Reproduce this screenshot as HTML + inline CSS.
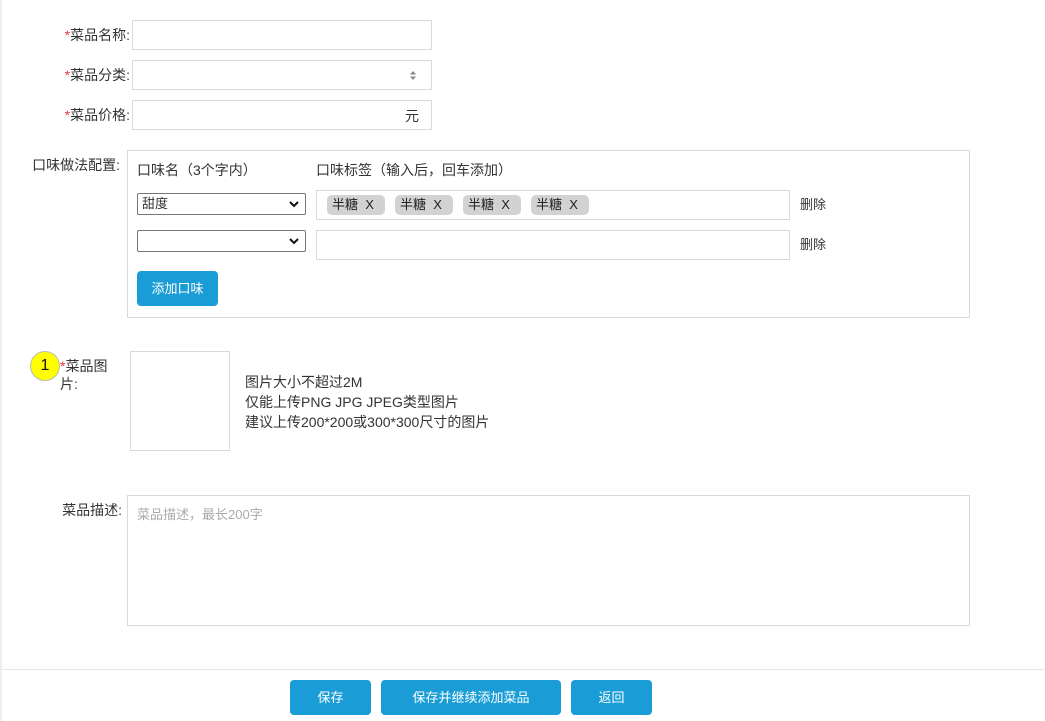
<!DOCTYPE html>
<html><head><meta charset="utf-8"><style>
*{box-sizing:border-box;margin:0;padding:0}
body{width:1045px;height:721px;background:#fff;position:relative;overflow:hidden;font-family:"Liberation Sans","Noto Sans CJK SC",sans-serif;font-size:14px;color:#333}
.a{position:absolute}
.lbl{position:absolute;text-align:right;font-size:14px;line-height:18px}
.r{color:#e33}
.inp{position:absolute;border:1px solid #d9d9d9;background:#fff}
.sel{position:absolute;border:1px solid #767676;border-radius:2px;background:#fff;font-size:13px;line-height:20px;padding-left:4px}
.tag{position:absolute;top:195px;width:58px;height:20px;background:#d2d2d2;border-radius:5px;font-size:13px;line-height:20px;padding-left:5px;color:#222}
.btn{position:absolute;background:#1a9dd6;color:#fff;border-radius:4px;text-align:center;font-size:13px}
.chev{position:absolute;right:5px;top:4px}
</style></head><body>
<div class="a" style="left:0;top:0;width:2px;height:721px;background:#eee"></div>

<div class="lbl" style="left:20px;width:110px;top:26px"><span class="r">*</span>菜品名称:</div>
<div class="inp" style="left:132px;top:20px;width:300px;height:30px"></div>
<div class="lbl" style="left:20px;width:110px;top:66px"><span class="r">*</span>菜品分类:</div>
<div class="inp" style="left:132px;top:60px;width:300px;height:30px">
<svg class="a" style="left:276px;top:9px" width="8" height="11"><path d="M1 4.5L4 1L7 4.5Z M1 6.5L4 10L7 6.5Z" fill="#888"/></svg></div>
<div class="lbl" style="left:20px;width:110px;top:106px"><span class="r">*</span>菜品价格:</div>
<div class="inp" style="left:132px;top:100px;width:300px;height:30px"><span class="a" style="left:272px;top:5px;font-size:14px">元</span></div>

<div class="lbl" style="left:8px;width:112px;top:156px">口味做法配置:</div>
<div class="inp" style="left:127px;top:150px;width:843px;height:168px"></div>
<div class="a" style="left:137px;top:161px;line-height:18px">口味名（3个字内）</div>
<div class="a" style="left:316px;top:161px;line-height:18px">口味标签（输入后，回车添加）</div>
<div class="sel" style="left:137px;top:193px;width:169px;height:22px">甜度<svg class="chev" width="12" height="12"><path d="M2 4L6 8L10 4" stroke="#111" stroke-width="2" fill="none"/></svg></div>
<div class="inp" style="left:316px;top:190px;width:474px;height:30px"></div>
<div class="tag" style="left:327px">半糖&nbsp; X</div>
<div class="tag" style="left:395px">半糖&nbsp; X</div>
<div class="tag" style="left:463px">半糖&nbsp; X</div>
<div class="tag" style="left:531px">半糖&nbsp; X</div>
<div class="a" style="left:800px;top:196px;line-height:18px;font-size:13px">删除</div>
<div class="sel" style="left:137px;top:230px;width:169px;height:22px"><svg class="chev" width="12" height="12"><path d="M2 4L6 8L10 4" stroke="#111" stroke-width="2" fill="none"/></svg></div>
<div class="inp" style="left:316px;top:230px;width:474px;height:30px"></div>
<div class="a" style="left:800px;top:236px;line-height:18px;font-size:13px">删除</div>
<div class="btn" style="left:137px;top:271px;width:81px;height:35px;line-height:35px">添加口味</div>

<div class="a" style="left:30px;top:351px;width:30px;height:30px;border-radius:50%;background:#ffff00;border:1px solid #bbb;text-align:center;line-height:28px;font-size:16px;color:#111">1</div>
<div class="a" style="left:60px;top:357px;line-height:18px;width:60px"><span class="r">*</span>菜品图<br>片:</div>
<div class="inp" style="left:130px;top:351px;width:100px;height:100px"></div>
<div class="a" style="left:245px;top:372px;line-height:20px">图片大小不超过2M<br>仅能上传PNG JPG JPEG类型图片<br>建议上传200*200或300*300尺寸的图片</div>

<div class="lbl" style="left:8px;width:114px;top:501px">菜品描述:</div>
<div class="inp" style="left:127px;top:495px;width:843px;height:131px"><span class="a" style="left:9px;top:10px;color:#aaa;line-height:18px;font-size:13px">菜品描述，最长200字</span></div>

<div class="a" style="left:2px;top:669px;width:1043px;height:1px;background:#e6e6e6"></div>
<div class="btn" style="left:290px;top:680px;width:81px;height:35px;line-height:35px">保存</div>
<div class="btn" style="left:381px;top:680px;width:180px;height:35px;line-height:35px">保存并继续添加菜品</div>
<div class="btn" style="left:571px;top:680px;width:81px;height:35px;line-height:35px">返回</div>
</body></html>
